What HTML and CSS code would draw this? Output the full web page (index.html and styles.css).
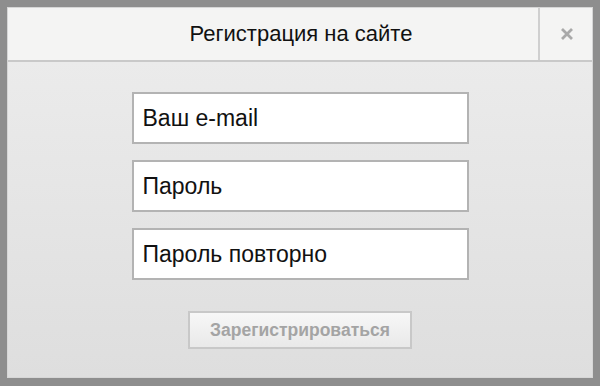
FILE: index.html
```html
<!DOCTYPE html>
<html lang="ru">
<head>
<meta charset="utf-8">
<link rel="stylesheet" href="styles.css">
</head>
<body>
<div class="backdrop">
  <div class="modal">
    <div class="modal-header">
      <div class="modal-title">Регистрация на сайте</div>
      <button class="modal-close" aria-label="Закрыть">
        <svg width="14" height="14" viewBox="0 0 14 14"><path d="M2 2 L12 12 M12 2 L2 12" stroke="#a9a9a9" stroke-width="2.8" stroke-linecap="butt"/></svg>
      </button>
    </div>
    <form class="modal-body">
      <div class="field">Ваш e-mail</div>
      <div class="field">Пароль</div>
      <div class="field">Пароль повторно</div>
      <button type="button" class="submit">Зарегистрироваться</button>
    </form>
  </div>
</div>
</body>
</html>
```

FILE: styles.css
```css
html, body {
  margin: 0;
  padding: 0;
  background: #8e8e8e;
  font-family: "Liberation Sans", Arial, sans-serif;
}

.backdrop {
  width: 600px;
  height: 386px;
  box-sizing: border-box;
  padding: 7px 7px 8px 7px;
  display: flex;
}

.modal {
  flex: 1;
  display: flex;
  flex-direction: column;
  border: 1px solid #d6d6d6;
  background: #f4f4f3;
}

.modal-header {
  height: 52px;
  display: flex;
  border-bottom: 2px solid #c9c9c9;
  background: #f4f4f3;
}

.modal-title {
  flex: 1;
  display: flex;
  align-items: center;
  justify-content: center;
  padding-left: 56px;
  padding-bottom: 1px;
  font-size: 22px;
  color: #111;
}

.modal-close {
  width: 54px;
  border: 0;
  border-left: 2px solid #cfcfcf;
  background: #f4f4f3;
  padding: 0 0 1px 2px;
  display: flex;
  align-items: center;
  justify-content: center;
}

.modal-body {
  flex: 1;
  margin: 0;
  display: flex;
  flex-direction: column;
  align-items: center;
  padding-top: 30px;
  gap: 16px;
  background: linear-gradient(#ebebeb, #dedede);
}

.field {
  width: 337px;
  height: 52px;
  box-sizing: border-box;
  border: 2px solid #b3b3b3;
  background: #fff;
  padding-left: 9px;
  display: flex;
  align-items: center;
  font-size: 23px;
  color: #111;
}

.submit {
  margin-top: 15px;
  width: 224px;
  height: 38px;
  box-sizing: border-box;
  border: 2px solid #c8c8c8;
  background: linear-gradient(#f7f7f7, #e9e9e9);
  font-family: "Liberation Sans", Arial, sans-serif;
  font-size: 17.5px;
  font-weight: bold;
  color: #a4a4a4;
  padding: 0;
}
```
